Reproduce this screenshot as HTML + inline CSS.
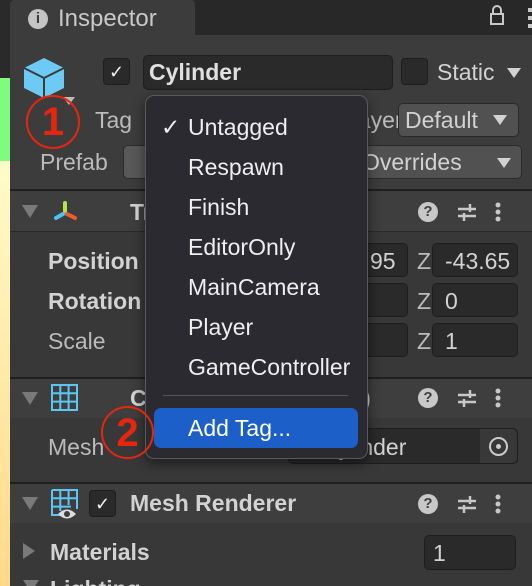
<html><head><style>
html{overflow:hidden;height:586px}
body{margin:0;width:532px;height:586px;overflow:hidden;background:#383838;font-family:"Liberation Sans",sans-serif;position:relative;color:#d2d2d2}
div,span{position:absolute;box-sizing:border-box}
.t{font-size:23px;white-space:nowrap}
.f{background:#2a2a2a;border:1px solid #1e1e1e;border-radius:5px}
.dd{background:#515151;border:1px solid #2a2a2a;border-radius:5px}
.tri{width:0;height:0;border-left:7px solid transparent;border-right:7px solid transparent;border-top:10px solid #d2d2d2}
.sep{left:10px;right:0;height:2px;background:#1f1f1f}
.hdr{left:10px;right:0;background:#3e3e3e}
.arr{width:0;height:0;border-left:8px solid transparent;border-right:8px solid transparent;border-top:13px solid #7a7a7a}
.mi{left:42px;font-size:23px;color:#eee;white-space:nowrap}
</style></head><body>
<div style="left:0;top:0;width:10px;height:78px;background:#2a2a2a"></div>
<div style="left:0;top:78px;width:10px;height:83px;background:#7dfc7d"></div>
<div style="left:0;top:161px;width:10px;height:425px;background:linear-gradient(#fffbc8,#ffd98a)"></div>
<div style="left:10px;top:0;width:522px;height:35px;background:#282828"></div>
<div style="left:10px;top:0;width:185px;height:37px;background:#3c3c3c;border-radius:4px 4px 0 0"></div>
<div style="left:28px;top:9px;width:20px;height:20px;border-radius:50%;background:#c4c4c4;color:#3c3c3c;font-weight:bold;font-size:15px;text-align:center;line-height:20px">i</div>
<div class="t" style="left:58px;top:5px;color:#c8c8c8;font-size:24px">Inspector</div>
<div style="left:490px;top:13px;width:14px;height:12px;border:2px solid #c8c8c8"></div>
<div style="left:492px;top:5px;width:10px;height:9px;border:2px solid #c8c8c8;border-bottom:none;border-radius:5px 5px 0 0"></div>
<div style="left:528px;top:8px;width:4px;height:20px;background:repeating-linear-gradient(#c8c8c8 0 4px,transparent 4px 8px)"></div>
<div style="left:10px;top:35px;width:522px;height:155px;background:#3c3c3c"></div>
<svg style="position:absolute;left:24px;top:56px" width="44" height="44"><path d="M20 2 L40 12 L40 32 L20 42 L0 32 L0 12Z" fill="#6ccaf4"/><path d="M0 12 L20 22 L40 12 M20 22 L20 42" stroke="#3c3c3c" stroke-width="2" fill="none"/></svg>
<div style="left:63px;top:97px;width:0;height:0;border-left:6px solid transparent;border-right:6px solid transparent;border-top:8px solid #bbb"></div>
<div style="left:103px;top:58px;width:27px;height:27px;background:#2a2a2a;border:1px solid #1e1e1e;border-radius:4px;color:#eee;font-size:18px;text-align:center;line-height:26px">✓</div>
<div class="f" style="left:143px;top:55px;width:250px;height:35px"></div>
<div class="t" style="left:149px;top:59px;color:#e0e0e0;font-weight:bold">Cylinder</div>
<div style="left:401px;top:58px;width:27px;height:27px;background:#2a2a2a;border:1px solid #1e1e1e;border-radius:4px"></div>
<div class="t" style="left:437px;top:59px">Static</div>
<div class="tri" style="left:507px;top:68px"></div>
<div class="t" style="left:95px;top:107px;color:#bbb">Tag</div>
<div class="t" style="left:345px;top:107px;color:#bbb">Layer</div>
<div class="dd" style="left:398px;top:103px;width:121px;height:34px"></div>
<div class="t" style="left:405px;top:107px">Default</div>
<div class="tri" style="left:493px;top:115px"></div>
<div class="t" style="left:40px;top:149px;color:#bbb">Prefab</div>
<div class="dd" style="left:123px;top:145px;width:40px;height:34px;background:#585858"></div>
<div class="dd" style="left:300px;top:145px;width:222px;height:34px"></div>
<div class="t" style="left:362px;top:149px">Overrides</div>
<div class="tri" style="left:497px;top:158px"></div>
<div class="sep" style="top:189px"></div>
<div class="hdr" style="top:191px;height:40px"></div>
<div class="arr" style="left:22px;top:205px"></div>
<svg style="position:absolute;left:52px;top:200px" width="28" height="24"><line x1="13" y1="3" x2="13" y2="11" stroke="#b7e34a" stroke-width="4" stroke-linecap="round"/><line x1="11" y1="14" x2="4" y2="18" stroke="#4cc3f2" stroke-width="4" stroke-linecap="round"/><line x1="15" y1="14" x2="23" y2="18" stroke="#f25c2a" stroke-width="4" stroke-linecap="round"/></svg>
<div class="t" style="left:130px;top:199px;font-weight:bold">Transform</div>
<div class="sep" style="top:231px;height:1px;background:#2a2a2a"></div>
<div class="t" style="left:48px;top:248px;font-weight:bold">Position</div>
<div class="t" style="left:48px;top:288px;font-weight:bold">Rotation</div>
<div class="t" style="left:48px;top:328px;color:#bbb">Scale</div>
<div class="f" style="left:340px;top:243px;width:68px;height:34px"></div><div class="t" style="left:370px;top:248px">95</div>
<div class="f" style="left:340px;top:283px;width:68px;height:34px"></div>
<div class="f" style="left:340px;top:323px;width:68px;height:34px"></div>
<div class="t" style="left:417px;top:248px;color:#bbb">Z</div><div class="f" style="left:432px;top:243px;width:86px;height:34px"></div><div class="t" style="left:445px;top:248px;overflow:hidden;width:73px">-43.65</div>
<div class="t" style="left:417px;top:288px;color:#bbb">Z</div><div class="f" style="left:432px;top:283px;width:86px;height:34px"></div><div class="t" style="left:445px;top:288px">0</div>
<div class="t" style="left:417px;top:328px;color:#bbb">Z</div><div class="f" style="left:432px;top:323px;width:86px;height:34px"></div><div class="t" style="left:445px;top:328px">1</div>
<div class="sep" style="top:377px"></div>
<div class="hdr" style="top:379px;height:39px"></div>
<div class="arr" style="left:22px;top:392px"></div>
<svg style="position:absolute;left:51px;top:384px" width="27" height="27"><path d="M1 1H26V26H1ZM9.3 1V26M17.6 1V26M1 9.3H26M1 17.6H26" stroke="#5cc6f4" stroke-width="2" fill="none"/></svg>
<div class="t" style="left:130px;top:385px;font-weight:bold">C</div>
<div class="t" style="left:363px;top:385px;font-weight:bold">)</div>
<div class="t" style="left:48px;top:434px;color:#bbb">Mesh</div>
<div class="f" style="left:288px;top:428px;width:230px;height:36px"></div>
<div class="t" style="left:322px;top:434px">Cylinder</div>
<div style="left:480px;top:429px;width:37px;height:34px;background:#383838;border-radius:0 5px 5px 0"></div>
<div style="left:489px;top:437px;width:19px;height:19px;border:2px solid #ccc;border-radius:50%"></div><div style="left:496px;top:444px;width:5px;height:5px;background:#ccc;border-radius:50%"></div>
<div class="sep" style="top:482px"></div>
<div class="hdr" style="top:484px;height:39px"></div>
<div class="arr" style="left:22px;top:497px"></div>
<svg style="position:absolute;left:51px;top:489px" width="30" height="32"><path d="M1 1H26V20M1 1V26H12M9.3 1V22M17.6 1V16M1 9.3H26M1 17.6H20" stroke="#5cc6f4" stroke-width="2" fill="none"/><path d="M7 25Q16 16 25 25Q16 34 7 25Z" fill="#ddd"/><circle cx="16" cy="25" r="3" fill="#3e3e3e"/></svg>
<div style="left:89px;top:490px;width:27px;height:27px;background:#2a2a2a;border:1px solid #1e1e1e;border-radius:4px;color:#eee;font-size:18px;text-align:center;line-height:26px">✓</div>
<div class="t" style="left:130px;top:490px;font-weight:bold">Mesh Renderer</div>
<div class="t" style="left:50px;top:539px;font-weight:bold">Materials</div>
<div style="left:23px;top:543px;border-top:8px solid transparent;border-bottom:8px solid transparent;border-left:12px solid #7a7a7a"></div>
<div class="f" style="left:424px;top:535px;width:92px;height:35px"></div><div class="t" style="left:433px;top:540px">1</div>
<div class="t" style="left:50px;top:576px;font-weight:bold">Lighting</div>
<div style="left:23px;top:580px;border-left:8px solid transparent;border-right:8px solid transparent;border-top:12px solid #7a7a7a"></div>
<div style="left:418px;top:202px;width:20px;height:20px;border-radius:50%;background:#c8c8c8;color:#3e3e3e;font-weight:bold;font-size:15px;text-align:center;line-height:20px">?</div>
<div style="left:418px;top:388px;width:20px;height:20px;border-radius:50%;background:#c8c8c8;color:#3e3e3e;font-weight:bold;font-size:15px;text-align:center;line-height:20px">?</div>
<div style="left:418px;top:494px;width:20px;height:20px;border-radius:50%;background:#c8c8c8;color:#3e3e3e;font-weight:bold;font-size:15px;text-align:center;line-height:20px">?</div>
<svg style="position:absolute;left:456px;top:201px" width="70" height="22"><path d="M2 8H20M2 15H20M14 3V11M8 12V20" stroke="#c8c8c8" stroke-width="2.5"/><circle cx="42" cy="4" r="2.5" fill="#c8c8c8"/><circle cx="42" cy="11" r="2.5" fill="#c8c8c8"/><circle cx="42" cy="18" r="2.5" fill="#c8c8c8"/></svg>
<svg style="position:absolute;left:456px;top:387px" width="70" height="22"><path d="M2 8H20M2 15H20M14 3V11M8 12V20" stroke="#c8c8c8" stroke-width="2.5"/><circle cx="42" cy="4" r="2.5" fill="#c8c8c8"/><circle cx="42" cy="11" r="2.5" fill="#c8c8c8"/><circle cx="42" cy="18" r="2.5" fill="#c8c8c8"/></svg>
<svg style="position:absolute;left:456px;top:493px" width="70" height="22"><path d="M2 8H20M2 15H20M14 3V11M8 12V20" stroke="#c8c8c8" stroke-width="2.5"/><circle cx="42" cy="4" r="2.5" fill="#c8c8c8"/><circle cx="42" cy="11" r="2.5" fill="#c8c8c8"/><circle cx="42" cy="18" r="2.5" fill="#c8c8c8"/></svg>
<div style="left:145px;top:95px;width:223px;height:364px;background:#2b2a30;border:1px solid #5a5a5e;border-radius:9px;box-shadow:0 4px 12px rgba(0,0,0,.5)"></div>
<div class="mi" style="left:161px;top:114px">✓</div>
<div class="mi" style="left:188px;top:114px">Untagged</div>
<div class="mi" style="left:188px;top:154px">Respawn</div>
<div class="mi" style="left:188px;top:194px">Finish</div>
<div class="mi" style="left:188px;top:234px">EditorOnly</div>
<div class="mi" style="left:188px;top:274px">MainCamera</div>
<div class="mi" style="left:188px;top:314px">Player</div>
<div class="mi" style="left:188px;top:354px">GameController</div>
<div style="left:163px;top:395px;width:185px;height:1px;background:#555"></div>
<div style="left:154px;top:408px;width:204px;height:40px;background:#1c5fc8;border-radius:7px"></div>
<div class="mi" style="left:188px;top:415px;color:#fff">Add Tag...</div>
<div style="left:26px;top:95px;width:54px;height:54px;border:2px solid #e8260f;border-radius:50%;color:#e8260f;font-size:40px;font-weight:bold;text-align:center;line-height:50px">1</div>
<div style="left:101px;top:406px;width:53px;height:53px;border:2px solid #e8260f;border-radius:50%;color:#e8260f;font-size:40px;font-weight:bold;text-align:center;line-height:50px">2</div>
</body></html>
